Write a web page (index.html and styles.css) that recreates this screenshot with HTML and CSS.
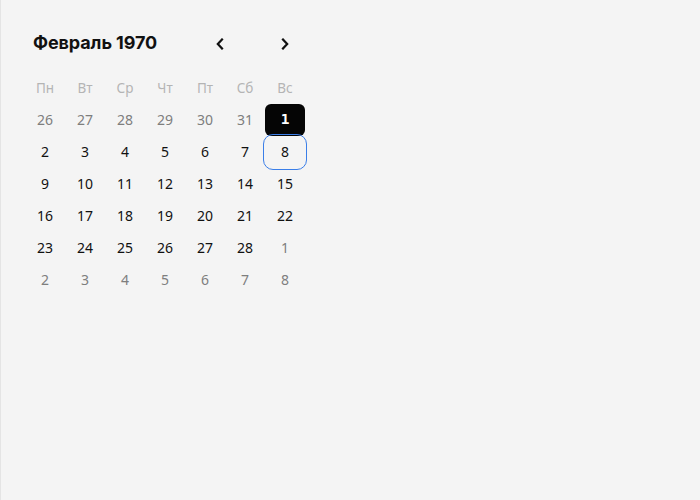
FILE: index.html
```html
<!DOCTYPE html>
<html lang="ru">
<head>
<meta charset="utf-8">
<link rel="stylesheet" href="styles.css">
</head>
<body>
<div class="page">
  <div class="calendar">
    <div class="header">
      <div class="title">Февраль 1970</div>
      <div class="nav">
        <button class="nav-btn" aria-label="prev">
          <svg width="10" height="12" viewBox="0 0 10 12"><path d="M7 1.5 L2.8 6 L7 10.5" fill="none" stroke="#111" stroke-width="2.2" stroke-linecap="square" stroke-linejoin="miter"/></svg>
        </button>
        <button class="nav-btn" aria-label="next">
          <svg width="10" height="12" viewBox="0 0 10 12"><path d="M3 1.5 L7.2 6 L3 10.5" fill="none" stroke="#111" stroke-width="2.2" stroke-linecap="square" stroke-linejoin="miter"/></svg>
        </button>
      </div>
    </div>
    <div class="grid">
      <div class="wd">Пн</div><div class="wd">Вт</div><div class="wd">Ср</div><div class="wd">Чт</div><div class="wd">Пт</div><div class="wd">Сб</div><div class="wd">Вс</div>
      <div class="d out">26</div><div class="d out">27</div><div class="d out">28</div><div class="d out">29</div><div class="d out">30</div><div class="d out">31</div><div class="d sel">1</div>
      <div class="d">2</div><div class="d">3</div><div class="d">4</div><div class="d">5</div><div class="d">6</div><div class="d">7</div><div class="d focus">8</div>
      <div class="d">9</div><div class="d">10</div><div class="d">11</div><div class="d">12</div><div class="d">13</div><div class="d">14</div><div class="d">15</div>
      <div class="d">16</div><div class="d">17</div><div class="d">18</div><div class="d">19</div><div class="d">20</div><div class="d">21</div><div class="d">22</div>
      <div class="d">23</div><div class="d">24</div><div class="d">25</div><div class="d">26</div><div class="d">27</div><div class="d">28</div><div class="d out">1</div>
      <div class="d out">2</div><div class="d out">3</div><div class="d out">4</div><div class="d out">5</div><div class="d out">6</div><div class="d out">7</div><div class="d out">8</div>
    </div>
  </div>
</div>
</body>
</html>
```
FILE: styles.css
```css
html, body {
  margin: 0;
  padding: 0;
  background: #f4f4f4;
}
.page {
  height: 500px;
  box-sizing: border-box;
  border-left: 1px solid #e4e4e4;
  padding: 26px 0 0 24px;
  font-family: "Noto Sans", "Open Sans", sans-serif;
}
.calendar {
  width: 280px;
}
.header {
  display: flex;
  align-items: center;
  justify-content: space-between;
  height: 32px;
  padding-left: 8px;
}
.title {
  font-family: Inter, "Noto Sans", sans-serif;
  font-weight: 700;
  font-size: 18px;
  letter-spacing: -0.1px;
  color: #111;
}
.nav {
  display: flex;
  gap: 25px;
}
.nav-btn {
  width: 40px;
  height: 32px;
  border: none;
  background: transparent;
  padding: 4px 0 0;
  display: flex;
  align-items: center;
  justify-content: center;
}
.grid {
  margin-top: 14px;
  display: grid;
  grid-template-columns: repeat(7, 40px);
  grid-auto-rows: 32px;
}
.wd, .d {
  display: flex;
  align-items: center;
  justify-content: center;
  font-size: 14px;
  box-sizing: border-box;
}
.wd {
  color: #b4b4b4;
  font-size: 13.5px;
}
.d {
  color: #111;
  padding-bottom: 2px;
}
.d.out {
  color: #7e7e7e;
}
.d.sel {
  background: #050505;
  color: #fff;
  border-radius: 6px;
  font-family: "DejaVu Sans Mono", monospace;
  font-weight: bold;
  font-size: 14.5px;
}
.d.focus {
  border-radius: 8px;
  outline: 1px solid #3a7ee8;
  outline-offset: 1px;
}
```
